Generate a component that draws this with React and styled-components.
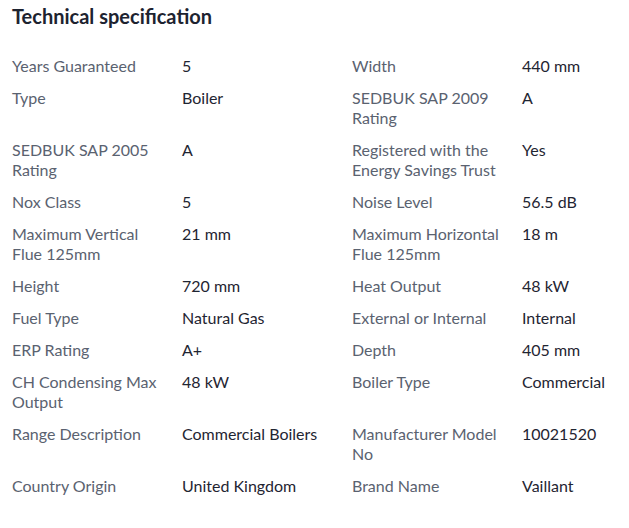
import React from "react";
import styled, { createGlobalStyle } from "styled-components";

const Global = createGlobalStyle`
  html, body { margin: 0; padding: 0; background: #ffffff; }
  body { font-family: Lato, "Open Sans", sans-serif; }
`;

const Wrap = styled.section`
  padding: 3px 12px 0 12px;
  width: 629px;
  box-sizing: border-box;
`;

const Title = styled.h2`
  margin: 0 0 21px 0;
  font-size: 20px;
  line-height: 26px;
  font-weight: 700;
  color: #1d2330;
`;

const Grid = styled.div`
  display: grid;
  grid-template-columns: 170px 170px 170px 1fr;
`;

const Cell = styled.div`
  padding: 6px 12px 6px 0;
  font-size: 16px;
  line-height: 20px;
  color: ${(p) => (p.$label ? "#5a6270" : "#1f2532")};
`;

const rows = [
  ["Years Guaranteed", "5", "Width", "440 mm"],
  ["Type", "Boiler", "SEDBUK SAP 2009 Rating", "A"],
  ["SEDBUK SAP 2005 Rating", "A", "Registered with the Energy Savings Trust", "Yes"],
  ["Nox Class", "5", "Noise Level", "56.5 dB"],
  ["Maximum Vertical Flue 125mm", "21 mm", "Maximum Horizontal Flue 125mm", "18 m"],
  ["Height", "720 mm", "Heat Output", "48 kW"],
  ["Fuel Type", "Natural Gas", "External or Internal", "Internal"],
  ["ERP Rating", "A+", "Depth", "405 mm"],
  ["CH Condensing Max Output", "48 kW", "Boiler Type", "Commercial"],
  ["Range Description", "Commercial Boilers", "Manufacturer Model No", "10021520"],
  ["Country Origin", "United Kingdom", "Brand Name", "Vaillant"],
];

export default function App() {
  return (
    <>
      <Global />
      <Wrap>
        <Title>Technical specification</Title>
        <Grid>
          {rows.map((r, i) => (
            <React.Fragment key={i}>
              <Cell $label>{r[0]}</Cell>
              <Cell>{r[1]}</Cell>
              <Cell $label>{r[2]}</Cell>
              <Cell>{r[3]}</Cell>
            </React.Fragment>
          ))}
        </Grid>
      </Wrap>
    </>
  );
}
